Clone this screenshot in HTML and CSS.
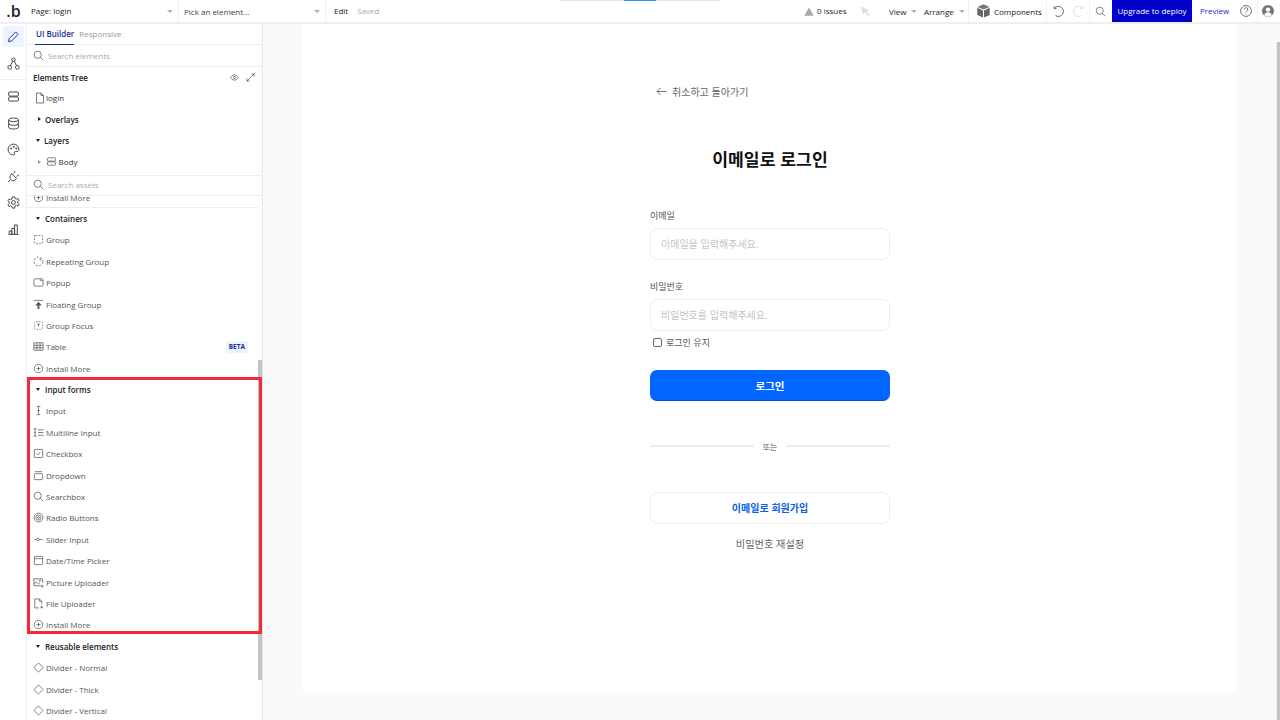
FILE: index.html
```html
<!DOCTYPE html>
<html lang="ko">
<head>
<meta charset="utf-8">
<title>Page: login</title>
<link rel="stylesheet" href="styles.css">
</head>
<body>
<svg class="sprite" width="0" height="0" aria-hidden="true">
  <symbol id="i-search" viewBox="0 0 12 12"><circle cx="5.2" cy="5.2" r="3.9"/><path d="M8 8l3.2 3.2"/></symbol>
  <symbol id="i-plus" viewBox="0 0 12 12"><circle cx="6" cy="6" r="4.6"/><path d="M3.8 6h4.4M6 3.8v4.4"/></symbol>
  <symbol id="i-diamond" viewBox="0 0 12 12"><path d="M6 1l5 5-5 5-5-5z"/></symbol>
</svg>

<header class="topbar">
  <div class="progress"><span class="progress-on"></span></div>
  <div class="logo">.b</div>
  <div class="top-select page-select"><span class="lift">Page: login</span><i class="caret"></i></div>
  <div class="top-select el-select"><span>Pick an element...</span><i class="caret"></i></div>
  <div class="edit-group lift"><span class="edit">Edit</span><span class="saved">Saved</span></div>
  <div class="top-right">
    <svg class="warn" viewBox="0 0 10 9"><path d="M5 .5L9.7 8.7H.3z"/></svg>
    <span class="issues lift">0 issues</span>
    <svg class="cursor" viewBox="0 0 11 11"><path d="M.8.8l8.4 2.9-3 1.2 3.6 4.2-1.2 1.1-3.6-4.2L3 8.6z"/></svg>
    <span class="menu view">View<i class="caret"></i></span>
    <span class="menu arrange">Arrange<i class="caret"></i></span>
    <span class="cell components">
      <svg class="cube" viewBox="0 0 13 14"><path d="M6.5.3l6 2.6-6 2.7-6-2.7z" fill="#777"/><path d="M.3 3.8l5.7 2.6v7.2L.3 11z" fill="#666"/><path d="M12.7 3.8L7 6.4v7.2l5.7-2.6z" fill="#666"/></svg>
      <span>Components</span>
    </span>
    <span class="cell history">
      <svg class="hist" viewBox="0 0 12 12"><path d="M2.2 1.2v2.4h2.4M2.3 3.6A5 5 0 1 1 3.6 10.6"/></svg>
      <svg class="hist off" viewBox="0 0 12 12"><path d="M9.8 1.2v2.4H7.400M9.800 3.600A5 5 0 1 0 8.400 10.600"/></svg>
    </span>
    <span class="cell find"><svg class="ic ic-find"><use href="#i-search"/></svg></span>
    <span class="upgrade">Upgrade to deploy</span>
    <span class="preview lift">Preview</span>
    <svg class="help" viewBox="0 0 12 12"><circle cx="6" cy="6" r="5.4"/><path d="M4.3 4.6A1.8 1.7 0 1 1 6.9 6c-.6.4-.9.7-.9 1.3M6 8.4v1"/></svg>
    <span class="cell user">
      <svg class="avatar" viewBox="0 0 12 12"><circle cx="6" cy="6" r="6" fill="#777"/><circle cx="6" cy="4.6" r="2.2" fill="#fff"/><path d="M2.2 10.2c.6-2 2-2.9 3.8-2.9s3.200.9 3.800 2.900A6 6 0 0 1 2.200 10.200z" fill="#fff"/></svg>
    </span>
  </div>
</header>

<div class="workspace">
  <nav class="rail">
    <div class="rail-top">
      <span class="rail-btn active"><svg viewBox="0 0 12 12"><path d="M2 8l6-6.200 2.200 2.200-6 6.200-2.700.5z"/></svg></span>
      <span class="rail-btn"><svg viewBox="0 0 12 12"><circle cx="6" cy="2.500" r="1.600"/><circle cx="2.500" cy="9.500" r="1.700"/><circle cx="9.500" cy="9.500" r="1.700"/><path d="M5.300 4L3.200 8M6.700 4l2.100 4"/></svg></span>
    </div>
    <div class="rail-bottom">
      <span class="rail-btn"><svg viewBox="0 0 12 12"><rect x="1.500" y="1.800" width="9" height="3.800" rx="1"/><rect x="1.500" y="6.400" width="9" height="3.800" rx="1"/></svg></span>
      <span class="rail-btn"><svg viewBox="0 0 12 12"><ellipse cx="6" cy="2.600" rx="4.500" ry="1.700"/><path d="M1.500 2.600v6.800c0 .9 2 1.700 4.500 1.700s4.500-.8 4.500-1.700V2.600M1.500 6c0 .9 2 1.700 4.500 1.700s4.500-.8 4.500-1.700"/></svg></span>
      <span class="rail-btn"><svg viewBox="0 0 12 12"><path d="M6 1a5 5 0 1 0 0 10c1.300 0 1.300-1 .8-1.600-.5-.7 0-1.600 1-1.500h1.400C10.400 7.900 11 7 11 6c0-2.800-2.200-5-5-5z"/><circle cx="3.800" cy="5" r=".6"/><circle cx="6.300" cy="3.500" r=".6"/><circle cx="8.600" cy="5" r=".6"/></svg></span>
      <span class="rail-btn"><svg viewBox="0 0 12 12"><path d="M4.200 3.200l4.600 4.600-1.500 1.500c-1.200 1-2.900 1-4-.6-1-1.300-.8-2.800.2-3.800zM2.900 9.100L1 11M7.500 1L6.100 3.200M11 4.500L8.800 5.900"/></svg></span>
      <span class="rail-btn"><svg viewBox="0 0 12 12"><circle cx="6" cy="6" r="1.800"/><path d="M5 .8h2l.4 1.500 1.400.6 1.300-.7 1 1.700-1.100 1.100v1.500l1.100 1.100-1 1.700-1.300-.7-1.400.6L7 11.200H5l-.4-1.500-1.400-.6-1.300.7-1-1.700L2 7V5.500L.9 4.400l1-1.700 1.300.7 1.400-.6z"/></svg></span>
      <span class="rail-btn"><svg viewBox="0 0 12 12"><path d="M1.500 10.500h9M2 10.500V7.500h2.500v3M4.500 10.500V5H7v5.500M7 10.500V1.800h2.500v8.700"/></svg></span>
    </div>
  </nav>

  <aside class="panel">
    <div class="tabs"><span class="tab on">UI Builder</span><span class="tab">Responsive</span></div>
    <div class="searchbar"><svg class="ic"><use href="#i-search"/></svg><span>Search elements</span></div>
    <div class="tree-head"><b>Elements Tree</b>
      <svg class="tool" viewBox="0 0 10 10"><path d="M.6 5S2.400 2 5 2s4.400 3 4.400 3-1.800 3-4.400 3S.6 5 .6 5z"/><circle cx="5" cy="5" r="1.300"/></svg>
      <svg class="tool" viewBox="0 0 10 10"><path d="M1 9l8-8M6 1h3v3M1 6v3h3"/></svg>
    </div>
    <div class="row tree-login"><svg class="ic" viewBox="0 0 12 12"><path d="M2.500 1h4.500l2.500 2.500V11h-7zM7 1v2.500h2.500"/></svg><span>login</span></div>
    <div class="row tree-bold"><i class="tri right"></i><b>Overlays</b></div>
    <div class="row tree-bold"><i class="tri"></i><b>Layers</b></div>
    <div class="row tree-body"><i class="tri right pale"></i><svg class="ic" viewBox="0 0 12 12"><rect x="1.500" y="2" width="9" height="3.600" rx="1"/><rect x="1.500" y="6.400" width="9" height="3.600" rx="1"/></svg><span>Body</span></div>
    <div class="searchbar assets"><svg class="ic"><use href="#i-search"/></svg><span>Search assets</span></div>

    <div class="assets-scroll">
      <div class="asset-list">
        <div class="row item"><svg class="ic"><use href="#i-plus"/></svg><span>Install More</span></div>
        <div class="row head"><i class="tri"></i><b>Containers</b></div>
        <div class="row item"><svg class="ic" viewBox="0 0 12 12"><rect x="1.500" y="1.500" width="9" height="9" rx="1" stroke-dasharray="2 1.500"/></svg><span>Group</span></div>
        <div class="row item"><svg class="ic" viewBox="0 0 12 12"><circle cx="6" cy="6" r="4.800" stroke-dasharray="2.500 1.500"/><path d="M7 3.500h1.500V5"/></svg><span>Repeating Group</span></div>
        <div class="row item"><svg class="ic" viewBox="0 0 12 12"><rect x="1" y="2" width="10" height="8" rx="1"/><path d="M8 2v2h3" stroke-width=".7"/></svg><span>Popup</span></div>
        <div class="row item"><svg class="ic" viewBox="0 0 12 12"><path d="M1 1.500h10" /><path class="fill" d="M6 3L2.500 7H5v4h2V7h2.500z"/></svg><span>Floating Group</span></div>
        <div class="row item"><svg class="ic" viewBox="0 0 12 12"><rect x="1.500" y="1.800" width="9" height="8.400" rx="2" stroke-dasharray="1.500 1.500"/><path d="M4.500 4.500h3M6 4.500V7"/></svg><span>Group Focus</span></div>
        <div class="row item"><svg class="ic" viewBox="0 0 12 12"><rect x="1" y="2" width="10" height="8"/><path d="M1 4.700h10M1 7.300h10M4.300 2v8M7.700 2v8"/></svg><span>Table</span><em class="beta">BETA</em></div>
        <div class="row item"><svg class="ic"><use href="#i-plus"/></svg><span>Install More</span></div>
        <div class="row head"><i class="tri"></i><b>Input forms</b></div>
        <div class="row item"><svg class="ic" viewBox="0 0 12 12"><path d="M4 1.500h4M4 10.500h4M6 1.500v9M4.800 6h2.400"/></svg><span>Input</span></div>
        <div class="row item"><svg class="ic" viewBox="0 0 12 12"><path d="M.6 2h3.400M.6 10h3.400M2.300 2v8M1.400 6h1.800M5.500 3h6M5.500 6h6M5.500 9h6"/></svg><span>Multiline Input</span></div>
        <div class="row item"><svg class="ic" viewBox="0 0 12 12"><rect x="1.500" y="1.500" width="9" height="9" rx=".8"/><path d="M4 6l1.500 1.500L8 4.500"/></svg><span>Checkbox</span></div>
        <div class="row item"><svg class="ic" viewBox="0 0 12 12"><path d="M2 1.800h8"/><rect x="1.500" y="4" width="9" height="6.500" rx=".8"/></svg><span>Dropdown</span></div>
        <div class="row item"><svg class="ic"><use href="#i-search"/></svg><span>Searchbox</span></div>
        <div class="row item"><svg class="ic" viewBox="0 0 12 12"><circle cx="6" cy="6" r="4.800"/><circle cx="6" cy="6" r="2.800"/><circle cx="6" cy="6" r="1" /></svg><span>Radio Buttons</span></div>
        <div class="row item"><svg class="ic" viewBox="0 0 12 12"><path d="M1.500 6h2.500M7 6h3.500"/><circle cx="5.500" cy="6" r="1.400"/></svg><span>Slider Input</span></div>
        <div class="row item"><svg class="ic" viewBox="0 0 12 12"><rect x="1.500" y="1.500" width="9" height="9" rx=".8"/><path d="M1.500 4h9"/></svg><span>Date/Time Picker</span></div>
        <div class="row item"><svg class="ic" viewBox="0 0 12 12"><path d="M8.500 9.500H1V2h9.500v4.500"/><path d="M1 7.500l2.500-2 2.500 2 1.500-1"/><circle cx="7.500" cy="4" r=".7"/><path d="M10 8.500v3M8.500 10h3"/></svg><span>Picture Uploader</span></div>
        <div class="row item"><svg class="ic" viewBox="0 0 12 12"><path d="M6.500 10.800H2V1h5l2.500 2.500V7M7 1v2.500h2.500"/><path d="M9.500 8.500v3M8 10h3"/></svg><span>File Uploader</span></div>
        <div class="row item"><svg class="ic"><use href="#i-plus"/></svg><span>Install More</span></div>
        <div class="row head"><i class="tri"></i><b>Reusable elements</b></div>
        <div class="row item"><svg class="ic"><use href="#i-diamond"/></svg><span>Divider - Normal</span></div>
        <div class="row item"><svg class="ic"><use href="#i-diamond"/></svg><span>Divider - Thick</span></div>
        <div class="row item"><svg class="ic"><use href="#i-diamond"/></svg><span>Divider - Vertical</span></div>
      </div>
      <span class="panel-thumb"></span>
    </div>
    <div class="highlight"></div>
  </aside>

  <main class="canvas">
    <section class="page">
      <div class="login">
        <div class="back"><svg viewBox="0 0 11 9"><path d="M10.500 4.500H1M4.500 1L1 4.500 4.500 8"/></svg><span>취소하고 돌아가기</span></div>
        <h1>이메일로 로그인</h1>
        <label class="field-label">이메일</label>
        <div class="field">이메일을 입력해주세요.</div>
        <label class="field-label second">비밀번호</label>
        <div class="field">비밀번호를 입력해주세요.</div>
        <div class="keep"><span class="box"></span><span>로그인 유지</span></div>
        <div class="btn primary">로그인</div>
        <div class="or"><span>또는</span></div>
        <div class="btn outline">이메일로 회원가입</div>
        <div class="reset">비밀번호 재설정</div>
      </div>
    </section>
    <span class="main-thumb"></span>
  </main>
</div>
</body>
</html>
```

FILE: styles.css
```css
* { box-sizing: border-box; }
html, body { margin: 0; height: 720px; overflow: hidden; }
body { font-family: "Open Sans", "Noto Sans CJK KR", sans-serif; font-size: 8px; color: #333; background: #fff; }
.sprite { position: absolute; }

/* top bar */
.topbar { position: relative; display: flex; align-items: center; height: 24px; background: #fff; border-bottom: 2px solid #eeeeee; color: #222; }
.lift { padding-bottom: 1px; }
.progress { position: absolute; left: 560px; top: 0; width: 160px; height: 1px; background: #e6e6e6; }
.progress-on { position: absolute; left: 64px; top: 0; width: 32px; height: 1px; background: #2f8fe0; }
.logo { width: 27px; text-align: center; font-family: "Open Sans", sans-serif; font-size: 16px; font-weight: 600; color: #222; line-height: 20px; }
.top-select { display: flex; align-items: center; justify-content: space-between; height: 22px; border-right: 1px solid #f2f2f2; padding: 0 5px 0 4px; }
.page-select { width: 152px; }
.el-select { width: 147px; padding-left: 5px; padding-right: 5px; color: #444; }
.caret { display: inline-block; width: 0; height: 0; border: 3px solid transparent; border-top: 3px solid #aab0b8; border-bottom: 0; }
.edit-group { display: flex; gap: 9px; padding-left: 8px; }
.edit { color: #222; }
.saved { color: #aaa; }
.top-right { position: absolute; left: 804px; top: 0; right: 0; height: 22px; display: flex; align-items: center; }
.warn { width: 10px; height: 9px; fill: #aaa; }
.issues { margin-left: 3px; width: 30px; white-space: nowrap; }
.cursor { width: 11px; height: 11px; fill: #ddd; margin-left: 13px; }
.menu { display: inline-flex; align-items: center; gap: 5px; white-space: nowrap; }
.view { margin-left: 18px; width: 35px; }
.arrange { width: 44px; }
.cell { display: flex; align-items: center; height: 22px; border-right: 1px solid #f2f2f2; }
.components { border-left: 1px solid #f2f2f2; padding-left: 8px; width: 79px; gap: 4px; }
.cube { width: 13px; height: 14px; }
.history { width: 43px; padding-left: 5px; gap: 9px; }
.hist { width: 12px; height: 12px; fill: none; stroke: #666; stroke-width: 1; }
.hist.off { stroke: #ddd; }
.find { width: 22px; padding-left: 5px; border-right: 0; }
.ic-find { stroke: #666; }
.upgrade { width: 80px; height: 22px; line-height: 22px; text-align: center; background: #0000c8; color: #fff; white-space: nowrap; }
.preview { margin-left: 8px; width: 40px; color: #1a1ad0; }
.help { width: 12px; height: 12px; fill: none; stroke: #666; stroke-width: .9; }
.user { margin-left: 5px; padding-left: 4px; border-left: 1px solid #f2f2f2; border-right: 0; }
.avatar { width: 12px; height: 12px; }

/* layout */
.workspace { display: flex; height: 696px; }

/* rail */
.rail { width: 27px; flex: none; border-right: 1px solid #eeeeee; }
.rail-top { height: 56px; padding-top: 2px; border-bottom: 1px solid #eeeeee; }
.rail-btn { display: flex; align-items: center; justify-content: center; width: 21px; height: 21px; margin: 0 0 6px 3px; border-radius: 3px; }
.rail-btn svg { width: 13px; height: 13px; fill: none; stroke: #444; stroke-width: .9; }
.rail-btn.active { background: #eef4fd; }
.rail-btn.active svg { stroke: #1a2fb0; }
.rail-bottom { padding-top: 6px; }
.rail-bottom .rail-btn { margin-bottom: 5.600px; }

/* panel */
.panel { position: relative; width: 236px; flex: none; border-right: 1px solid #e8e8e8; display: flex; flex-direction: column; height: 696px; }
.tabs { display: flex; gap: 5px; height: 21px; padding-left: 8px; border-bottom: 1px solid #eeeeee; }
.tab { padding-top: 4px; height: 21px; color: #999; }
.tab.on { color: #1a2a9c; font-weight: 600; border-bottom: 1px solid #1a2a9c; padding-left: 1px; }
.searchbar { display: flex; align-items: center; gap: 4px; height: 22px; padding-left: 6px; padding-bottom: 1px; border-bottom: 1px solid #eeeeee; color: #aaa; }
.ic { width: 11px; height: 11px; flex: none; fill: none; stroke: #555; stroke-width: .8; }
.ic .fill { fill: #555; stroke: none; }
.tree-head { display: flex; align-items: center; height: 20px; padding: 0 7px 0 6px; color: #222; }
.tree-head b { font-weight: 600; flex: 1; }
.tool { width: 9px; height: 9px; margin-left: 7px; fill: none; stroke: #555; stroke-width: .8; }
.row { display: flex; align-items: center; height: 21.400px; white-space: nowrap; }
.tree-login { padding-left: 7px; gap: 0; }
.tree-login .ic { width: 12px; height: 12px; }
.tree-bold { padding-left: 8px; gap: 4.500px; color: #222; }
.tree-bold b, .head b { font-weight: 600; }
.tree-body { padding-left: 8px; gap: 2px; }
.tree-body .tri { margin-right: 3px; }
.tri { display: inline-block; width: 0; height: 0; border-style: solid; border-width: 3px 2.500px 0; border-color: #222 transparent transparent; flex: none; margin-left: .500px; }
.tri.right { border-width: 2.500px 0 2.500px 3px; border-color: transparent transparent transparent #222; margin-left: 2.500px; }
.tri.pale { border-color: transparent transparent transparent #999; }
.assets { height: 21px; margin-top: 2px; border-top: 1px solid #eeeeee; background: #fff; }
.assets-scroll { position: relative; flex: 1; overflow: hidden; }
.asset-list { margin-top: -9.200px; padding-right: 4px; }
.head { padding-left: 8px; gap: 5.500px; color: #222; }
.item { padding-left: 6px; gap: 1px; color: #555; }
.item .ic { margin-right: 1px; }
.asset-list > .row:nth-child(2) { box-shadow: 0 -1px 0 #eeeeee; }
.beta { margin-left: auto; margin-right: 10px; padding: 0 3px; height: 12px; line-height: 12px; background: #eef4fd; color: #1a2a9c; font-style: normal; font-weight: 700; font-size: 6.500px; border-radius: 2px; }
.panel-thumb { position: absolute; right: 0; top: 164.500px; width: 4px; height: 320px; background: #c4c4c4; }
.highlight { position: absolute; left: 0; top: 353px; width: 235px; height: 257px; border: 3px solid #f42a38; pointer-events: none; }

/* canvas */
.canvas { position: relative; flex: 1; background: #fafafa; padding-left: 40px; overflow: hidden; }
.page { width: 933px; height: 669px; background: #fff; }
.login { width: 240px; margin-left: 347px; padding-top: 58px; display: flex; flex-direction: column; font-family: "Noto Sans CJK KR", sans-serif; }
.back { display: flex; align-items: center; gap: 5px; height: 18px; padding-left: 6px; font-size: 10px; color: #666; }
.back svg { width: 11px; height: 9px; fill: none; stroke: #666; stroke-width: .9; }
h1 { margin: 0; margin-top: 47px; height: 24px; line-height: 24px; font-size: 17.200px; font-weight: 700; text-align: center; color: #111; }
.field-label { display: block; margin-top: 38px; height: 14px; line-height: 14px; font-size: 9px; color: #555; }
.field-label.second { margin-top: 20px; }
.field { margin-top: 5px; height: 32px; line-height: 30px; padding-left: 10px; border: 1px solid #eeeeee; border-radius: 7px; font-size: 10px; color: #c4c4c4; }
.keep { display: flex; align-items: center; gap: 4px; height: 14px; margin-top: 4px; padding-left: 3px; font-size: 9px; color: #555; }
.box { width: 9px; height: 9px; border: 1px solid #666; border-radius: 2px; }
.btn { display: flex; align-items: center; justify-content: center; height: 32px; border-radius: 7px; font-size: 10px; font-weight: 700; }
.primary { margin-top: 21px; height: 31px; background: #0066ff; color: #fff; border-bottom: 1px solid #0052d0; font-size: 10.500px; }
.or { position: relative; margin-top: 36px; height: 18px; display: flex; align-items: center; justify-content: center; font-size: 8px; color: #555; }
.or::before { content: ""; position: absolute; left: 0; right: 0; top: 8px; height: 2px; background: #eeeeee; }
.or span { position: relative; background: #fff; padding: 0 9px; }
.outline { margin-top: 37px; padding-bottom: 2px; border: 1px solid #eeeeee; color: #0a5fe8; }
.reset { margin-top: 11px; text-align: center; height: 18px; line-height: 18px; font-size: 10.200px; color: #666; }
.main-thumb { position: absolute; right: 0; top: 18px; bottom: 0; width: 3px; background: #c4c4c4; box-shadow: -1px 0 0 #ececec; }
```
